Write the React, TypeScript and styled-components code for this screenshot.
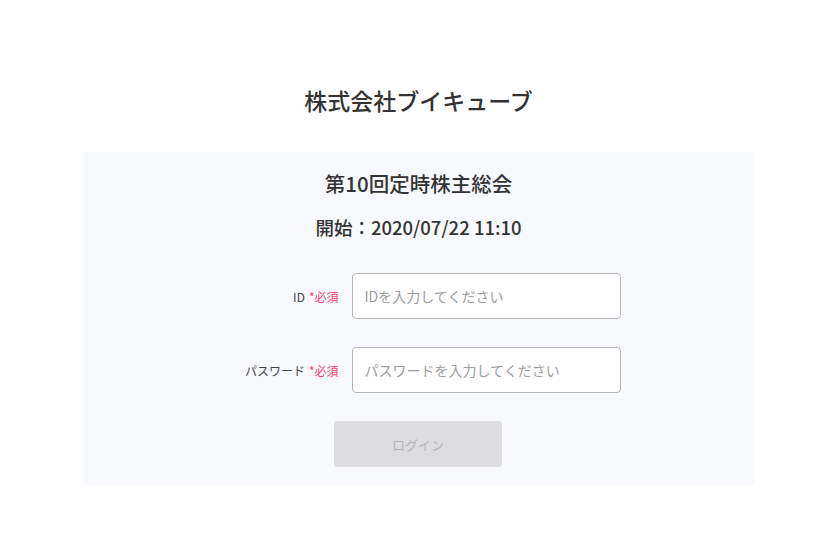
import React, { useState } from "react";
import styled, { createGlobalStyle } from "styled-components";

const GlobalStyle = createGlobalStyle`
  body {
    margin: 0;
    background: #ffffff;
    font-family: "Noto Sans CJK JP", "Noto Sans", sans-serif;
    color: #333333;
  }
`;

const StyledPage = styled.div`
  display: flex;
  flex-direction: column;
  align-items: center;
  padding: 83px 3px 0 0;
`;

const StyledCompany = styled.h1`
  margin: 0;
  font-size: 23px;
  line-height: 34px;
  font-weight: 500;
  color: #333333;
`;

const StyledPanel = styled.section`
  box-sizing: border-box;
  width: 671px;
  margin-top: 35px;
  padding: 16px 0 18px;
  background: #f8f9fd;
  display: flex;
  flex-direction: column;
  align-items: center;
`;

const StyledMeetingTitle = styled.h2`
  margin: 0;
  font-size: 20.5px;
  line-height: 30px;
  font-weight: 500;
  color: #333333;
`;

const StyledStart = styled.p`
  margin: 14px 0 0;
  font-size: 18.5px;
  line-height: 30px;
  font-weight: 500;
  color: #333333;
`;

const StyledForm = styled.form`
  display: flex;
  flex-direction: column;
  align-items: center;
  gap: 28px;
  margin-top: 31px;
`;

const StyledRow = styled.div`
  display: grid;
  grid-template-columns: 122px 269px;
  column-gap: 13px;
  align-items: center;
`;

const StyledLabel = styled.label`
  text-align: right;
  font-size: 12px;
  color: #444444;
  white-space: nowrap;
`;

const StyledRequired = styled.span`
  color: #f2416b;
  margin-left: 4px;
`;

const StyledInput = styled.input`
  box-sizing: border-box;
  width: 269px;
  height: 46px;
  padding: 0 12px;
  border: 1px solid #b5b5b8;
  border-radius: 4px;
  background: #ffffff;
  font-family: inherit;
  font-size: 14px;
  color: #333333;
  outline: none;

  &::placeholder {
    color: #9c9c9f;
  }
`;

const StyledButton = styled.button`
  width: 168px;
  height: 46px;
  margin-left: -1px;
  border: none;
  border-radius: 4px;
  background: #dcdce1;
  color: #b4b4b9;
  font-family: inherit;
  font-size: 13px;
  cursor: default;
`;

const Field = ({
  id,
  label,
  placeholder,
  type,
}: {
  id: string;
  label: string;
  placeholder: string;
  type?: string;
}) => {
  const [value, setValue] = useState("");
  return (
    <StyledRow>
      <StyledLabel htmlFor={id}>
        {label}
        <StyledRequired>*必須</StyledRequired>
      </StyledLabel>
      <StyledInput
        id={id}
        type={type}
        value={value}
        placeholder={placeholder}
        onChange={(e) => setValue(e.target.value)}
      />
    </StyledRow>
  );
};

export default function App() {
  return (
    <>
      <GlobalStyle />
      <StyledPage>
        <StyledCompany>株式会社ブイキューブ</StyledCompany>
        <StyledPanel>
          <StyledMeetingTitle>第10回定時株主総会</StyledMeetingTitle>
          <StyledStart>開始：2020/07/22 11:10</StyledStart>
          <StyledForm onSubmit={(e) => e.preventDefault()}>
            <Field id="login-id" label="ID" placeholder="IDを入力してください" />
            <Field
              id="login-password"
              label="パスワード"
              placeholder="パスワードを入力してください"
              type="password"
            />
            <StyledButton type="submit" disabled>
              ログイン
            </StyledButton>
          </StyledForm>
        </StyledPanel>
      </StyledPage>
    </>
  );
}
